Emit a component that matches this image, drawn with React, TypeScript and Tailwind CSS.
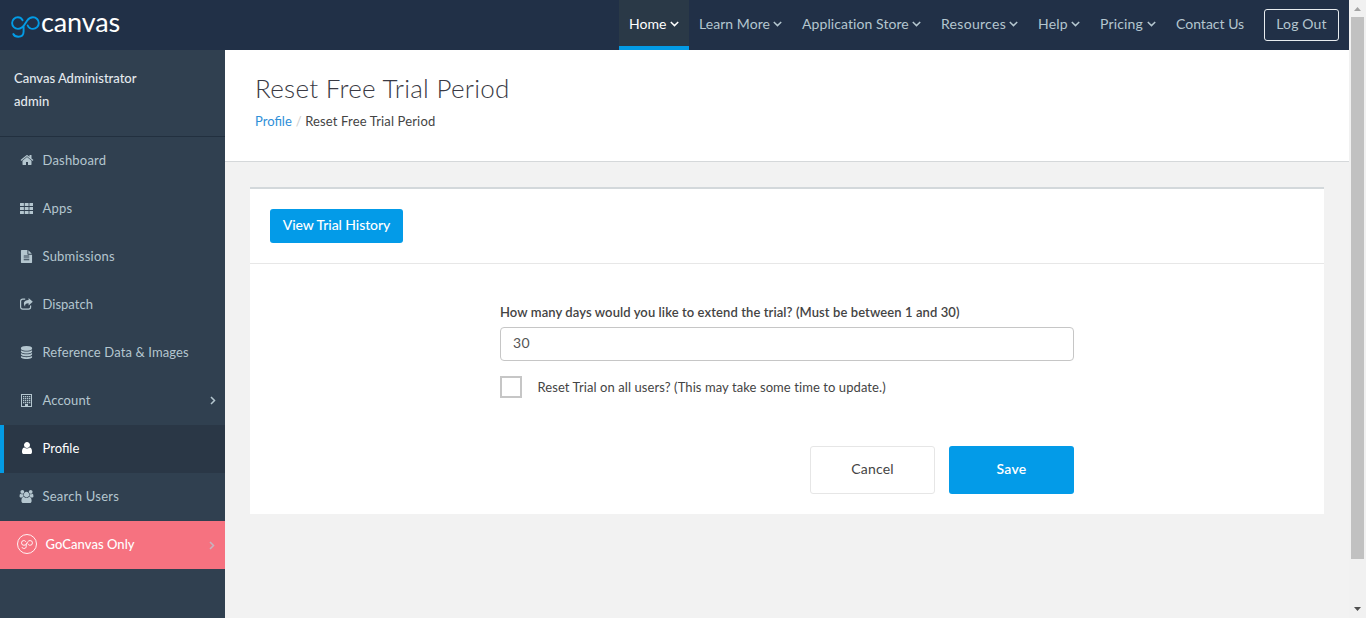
import React from "react";

type IconProps = { className?: string };

const HOME =
  "M1472 992v480q0 26-19 45t-45 19h-384v-384h-256v384h-384q-26 0-45-19t-19-45v-480q0-1 .5-3t.5-3l575-474 575 474q1 2 1 6zm223-69l-62 74q-8 9-21 11h-3q-13 0-21-7l-692-577-692 577q-12 8-24 7-13-2-21-11l-62-74q-8-10-7-23.5t11-21.5l719-599q32-26 76-26t76 26l244 204v-195q0-14 9-23t23-9h192q14 0 23 9t9 23v408l219 182q10 8 11 21.5t-7 23.5z";
const FILE =
  "M1596 476q14 14 28 36h-472v-472q22 14 36 28zm-476 164h544v1056q0 40-28 68t-68 28h-1344q-40 0-68-28t-28-68v-1600q0-40 28-68t68-28h800v544q0 40 28 68t68 28zm160 736v-64q0-14-9-23t-23-9h-704q-14 0-23 9t-9 23v64q0 14 9 23t23 9h704q14 0 23-9t9-23zm0-256v-64q0-14-9-23t-23-9h-704q-14 0-23 9t-9 23v64q0 14 9 23t23 9h704q14 0 23-9t9-23zm0-256v-64q0-14-9-23t-23-9h-704q-14 0-23 9t-9 23v64q0 14 9 23t23 9h704q14 0 23-9t9-23z";
const DATABASE =
  "M896 768q237 0 443-43t325-127v170q0 69-103 128t-280 93.5-385 34.5-385-34.5-280-93.5-103-128v-170q119 84 325 127t443 43zm0 768q237 0 443-43t325-127v170q0 69-103 128t-280 93.5-385 34.5-385-34.5-280-93.5-103-128v-170q119 84 325 127t443 43zm0-384q237 0 443-43t325-127v170q0 69-103 128t-280 93.5-385 34.5-385-34.5-280-93.5-103-128v-170q119 84 325 127t443 43zm0-1152q208 0 385 34.5t280 93.5 103 128v128q0 69-103 128t-280 93.5-385 34.5-385-34.5-280-93.5-103-128v-128q0-69 103-128t280-93.5 385-34.5z";
const USER =
  "M1536 1399q0 109-62.5 187t-150.5 78h-854q-88 0-150.5-78t-62.5-187q0-85 8.5-160.5t31.5-152 58.5-131 94-89 134.5-34.5q131 128 313 128t313-128q76 0 134.5 34.5t94 89 58.5 131 31.5 152 8.5 160.5zm-256-887q0 159-112.5 271.5t-271.5 112.5-271.5-112.5-112.5-271.5 112.5-271.5 271.5-112.5 271.5 112.5 112.5 271.5z";
const USERS =
  "M593 896q-162 5-265 128h-134q-82 0-138-40.5t-56-118.5q0-353 124-353 6 0 43.5 21t97.5 42.5 119 21.5q67 0 133-23-5 37-5 66 0 139 81 256zm1071 637q0 120-73 189.5t-194 69.5h-874q-121 0-194-69.5t-73-189.5q0-53 3.5-103.5t14-109 26.5-108.5 43-97.5 62-81 85.5-53.5 111.5-20q10 0 43 21.5t73 48 107 48 135 21.5 135-21.5 107-48 73-48 43-21.5q61 0 111.5 20t85.5 53.5 62 81 43 97.5 26.5 108.5 14 109 3.5 103.5zm-1024-1277q0 106-75 181t-181 75-181-75-75-181 75-181 181-75 181 75 75 181zm704 384q0 159-112.5 271.5t-271.5 112.5-271.5-112.5-112.5-271.5 112.5-271.5 271.5-112.5 271.5 112.5 112.5 271.5zm576 225q0 78-56 118.5t-138 40.5h-134q-103-123-265-128 81-117 81-256 0-29-5-66 66 23 133 23 59 0 119-21.5t97.5-42.5 43.5-21q124 0 124 353zm-128-609q0 106-75 181t-181 75-181-75-75-181 75-181 181-75 181 75 75 181z";

const Glyph = ({ d, box = "0 0 1792 1792", className = "h-[13px] w-[13px]" }: { d: string; box?: string; className?: string }) => (
  <svg viewBox={box} fill="currentColor" className={className}>
    <path d={d} />
  </svg>
);

const GridIcon = () => (
  <svg viewBox="0 0 13 11" fill="currentColor" className="h-[11px] w-[13px]">
    {[0, 4, 8].map((y) =>
      [0, 4.7, 9.4].map((x) => <rect key={`${x}-${y}`} x={x} y={y} width="3.9" height="3.1" rx="0.3" />)
    )}
  </svg>
);

const ShareIcon = () => (
  <svg viewBox="0 0 13 12" className="h-[12px] w-[13px]" fill="none">
    <path d="M5.2 1.2H2.6A2 2 0 0 0 .6 3.2v5.9a2 2 0 0 0 2 2h6a2 2 0 0 0 2-2V7.6" stroke="currentColor" strokeWidth="1.2" />
    <path d="M8.6 0 12.8 3.7 8.6 7.4V5.3C6.2 5.2 4.8 5.9 5.1 8.7 3 6 3.4 2.2 8.6 2.1z" fill="currentColor" />
  </svg>
);

const BuildingIcon = () => (
  <svg viewBox="0 0 11 13" className="h-[13px] w-[11px]" fill="none">
    <rect x=".5" y=".5" width="10" height="12" stroke="currentColor" />
    {[2, 4, 6, 8].map((y) =>
      [2, 4, 6, 8].map((x) => <rect key={`${x}-${y}`} x={x} y={y} width="1.3" height="1.3" fill="currentColor" />)
    )}
    <rect x="4" y="10" width="3" height="2.5" fill="currentColor" />
  </svg>
);

const ChevronDown = () => (
  <svg viewBox="0 0 9 6" className="h-[6px] w-[9px]" fill="none">
    <path d="M.8 1l3.7 3.6L8.2 1" stroke="currentColor" strokeWidth="1.5" />
  </svg>
);

const ChevronRight = ({ className = "" }: IconProps) => (
  <svg viewBox="0 0 6 9" className={`h-[9px] w-[6px] ${className}`} fill="none">
    <path d="M1 1l3.5 3.5L1 8" stroke="currentColor" strokeWidth="1.5" />
  </svg>
);

const GoMark = ({ className = "", weight = 1.9 }: IconProps & { weight?: number }) => (
  <svg viewBox="0 0 29 22" className={className} fill="none" stroke="currentColor" strokeWidth={weight} strokeLinecap="round">
    <path d="M11.6 4.2C10.5 2.3 8.8 1.3 6.9 1.3a5.8 5.8 0 0 0 0 11.6c5.5 0 7-5.200 9.3-8.400C17.6 2.5 19.8 1.3 22 1.3a5.8 5.8 0 0 1 0 11.6c-2.4 0-4.400-1.200-5.300-3.400M12.600 10.200v5.200c0 3.500-2 5.300-5.300 5.300-2.500 0-4.200-.9-5-2.700" />
  </svg>
);

const nav = [
  { label: "Home", w: "w-[70px]", ls: "tracking-[0.05px]", active: true, menu: true },
  { label: "Learn More", w: "w-[103px]", ls: "tracking-[0.05px]", menu: true },
  { label: "Application Store", w: "w-[139px]", ls: "tracking-[0.08px]", menu: true },
  { label: "Resources", w: "w-[97px]", ls: "tracking-[0.3px]", menu: true },
  { label: "Help", w: "w-[62px]", ls: "tracking-[0.2px]", menu: true },
  { label: "Pricing", w: "w-[76px]", ls: "tracking-[0.15px]", menu: true },
  { label: "Contact Us", w: "w-[88px]", ls: "tracking-[0px]" },
];

const side = [
  { label: "Dashboard", ls: "tracking-[0.2px]", icon: <Glyph d={HOME} className="h-[14px] w-[14px]" /> },
  { label: "Apps", ls: "tracking-[0.2px]", icon: <GridIcon /> },
  { label: "Submissions", ls: "tracking-[0.22px]", icon: <Glyph d={FILE} /> },
  { label: "Dispatch", ls: "tracking-[0.02px]", icon: <ShareIcon /> },
  { label: "Reference Data & Images", ls: "tracking-[0.12px]", icon: <Glyph d={DATABASE} /> },
  { label: "Account", ls: "tracking-[0.1px]", icon: <BuildingIcon />, more: true },
  { label: "Profile", ls: "tracking-[0px]", icon: <Glyph d={USER} className="h-[14px] w-[14px]" />, active: true },
  { label: "Search Users", ls: "tracking-[0.24px]", icon: <Glyph d={USERS} box="0 0 1920 1792" className="h-[13px] w-[15px]" /> },
];

function Header() {
  return (
    <header className="flex h-[50px] shrink-0 bg-[#213047]">
      <div className="flex flex-1 items-start pl-[11px] pt-[7px]">
        <GoMark className="mt-[9px] h-[22px] w-[29px] text-[#039be5]" />
        <span className="ml-[1px] text-[27px] leading-[30px] tracking-[-0.15px] text-white">canvas</span>
      </div>
      <nav className="flex text-[14px] text-[#b4c6cf]">
        {nav.map((n) => (
          <a
            key={n.label}
            className={`flex h-[50px] items-center justify-between whitespace-nowrap px-[10px] ${n.w} ${n.ls} ${
              n.active ? "border-b-4 border-[#039be5] bg-[#2a3947] pt-[1px] text-white" : "pb-[3px]"
            }`}
          >
            {n.label}
            {n.menu && <ChevronDown />}
          </a>
        ))}
      </nav>
      <a className="ml-[10px] mr-[10px] mt-[9px] flex h-[32px] w-[75px] items-center justify-center rounded-[3px] border border-[#e8ecef] pb-[3px] text-[14px] tracking-[0.15px] text-[#b4c6cf]">
        Log Out
      </a>
    </header>
  );
}

function Sidebar() {
  return (
    <aside className="w-[225px] shrink-0 bg-[#304050] text-[13px]">
      <div className="h-[87px] border-b border-[#22303f] pl-[14px] pt-[17px] font-medium leading-[23px] text-[#e4eaee]">
        <p>Canvas Administrator</p>
        <p className="tracking-[0.1px]">admin</p>
      </div>
      {side.map((s) => (
        <a
          key={s.label}
          className={`flex h-[48px] items-center ${
            s.active ? "border-l-4 border-[#039be5] bg-[#2a3746] pl-[13px] text-white" : "pl-[17px] text-[#b4c6cf]"
          }`}
        >
          <span className="flex w-[19px] justify-center pb-[2px]">{s.icon}</span>
          <span className={`ml-[6.5px] flex-1 whitespace-nowrap ${s.ls}`}>{s.label}</span>
          {s.more && <ChevronRight className="mb-[1px] mr-[9px]" />}
        </a>
      ))}
      <a className="flex h-[48px] items-center bg-[#f67280] pl-[17px] text-white">
        <span className="mb-[2px] flex h-[20px] w-[20px] items-center justify-center rounded-full border border-white/90">
          <GoMark className="mt-[1px] h-[9px] w-[12px]" weight={2.2} />
        </span>
        <span className="ml-[8.5px] flex-1 font-medium tracking-[0.05px]">GoCanvas Only</span>
        <ChevronRight className="mr-[10px] text-[#c5b5c0]" />
      </a>
    </aside>
  );
}

function Main() {
  return (
    <main className="flex-1 bg-[#f2f2f2] text-[#444]">
      <div className="h-[112px] border-b border-[#d5d8da] bg-white pl-[30px] pt-[22px]">
        <h1 className="text-[26px] font-light leading-[32px] tracking-[0.28px] text-[#3a3a44]">Reset Free Trial Period</h1>
        <p className="mt-[7px] flex text-[13px] leading-[20px]">
          <a className="text-[#2f8fd8]">Profile</a>
          <span className="ml-[4px] mr-[3.5px] text-[#ccc]">/</span>
          <span className="tracking-[0.15px]">Reset Free Trial Period</span>
        </p>
      </div>
      <section className="ml-[25px] mt-[25px] h-[327px] w-[1074px] border-t-2 border-[#d3d8db] bg-white">
        <div className="h-[75px] border-b border-[#e7e7e7] pl-[20px] pt-[20px]">
          <button className="h-[34px] w-[133px] rounded-[3px] bg-[#039be8] pb-[3px] text-[14px] font-medium tracking-[-0.08px] text-white">
            View Trial History
          </button>
        </div>
        <form className="ml-[250px] w-[574px] pt-[38px]">
          <label className="block whitespace-nowrap text-[13px] font-semibold leading-[20px] tracking-[0.09px]">
            How many days would you like to extend the trial? (Must be between 1 and 30)
          </label>
          <div className="mt-[5px] flex h-[34px] items-center rounded-[4px] border border-[#c6c6c6] pb-[3px] pl-[12px] text-[14px] tracking-[0.3px] text-[#555]">30</div>
          <div className="mt-[15px] flex h-[22px] items-center text-[13px]">
            <span className="h-[22px] w-[22px] border-2 border-[#c6c6c6]" />
            <span className="ml-[15.5px] whitespace-nowrap pt-[2px] tracking-[0.08px]">Reset Trial on all users? (This may take some time to update.)</span>
          </div>
          <div className="mt-[48px] flex justify-end gap-[14px] text-[14px]">
            <button className="h-[48px] w-[125px] rounded-[3px] border border-[#e6e6e6] pb-[3px] tracking-[0.2px]">Cancel</button>
            <button className="h-[48px] w-[125px] rounded-[3px] bg-[#039be8] pb-[3px] font-semibold tracking-[0.2px] text-white">Save</button>
          </div>
        </form>
      </section>
    </main>
  );
}

function Scrollbar() {
  return (
    <div className="flex w-[17px] shrink-0 flex-col items-center bg-[#f1f1f1]">
      <svg viewBox="0 0 17 17" className="h-[17px] w-[17px]" fill="#a3a3a3">
        <path d="M5 11h7L8.5 7z" />
      </svg>
      <div className="h-[542px] w-[13px] bg-[#c1c1c1]" />
      <div className="flex-1" />
      <svg viewBox="0 0 17 17" className="h-[17px] w-[17px]" fill="#505050">
        <path d="M5 6h7l-3.5 4z" />
      </svg>
    </div>
  );
}

export default function App() {
  return (
    <div className="flex h-[618px] w-[1366px] overflow-hidden font-['Lato',sans-serif]">
      <div className="flex flex-1 flex-col">
        <Header />
        <div className="flex flex-1">
          <Sidebar />
          <Main />
        </div>
      </div>
      <Scrollbar />
    </div>
  );
}
